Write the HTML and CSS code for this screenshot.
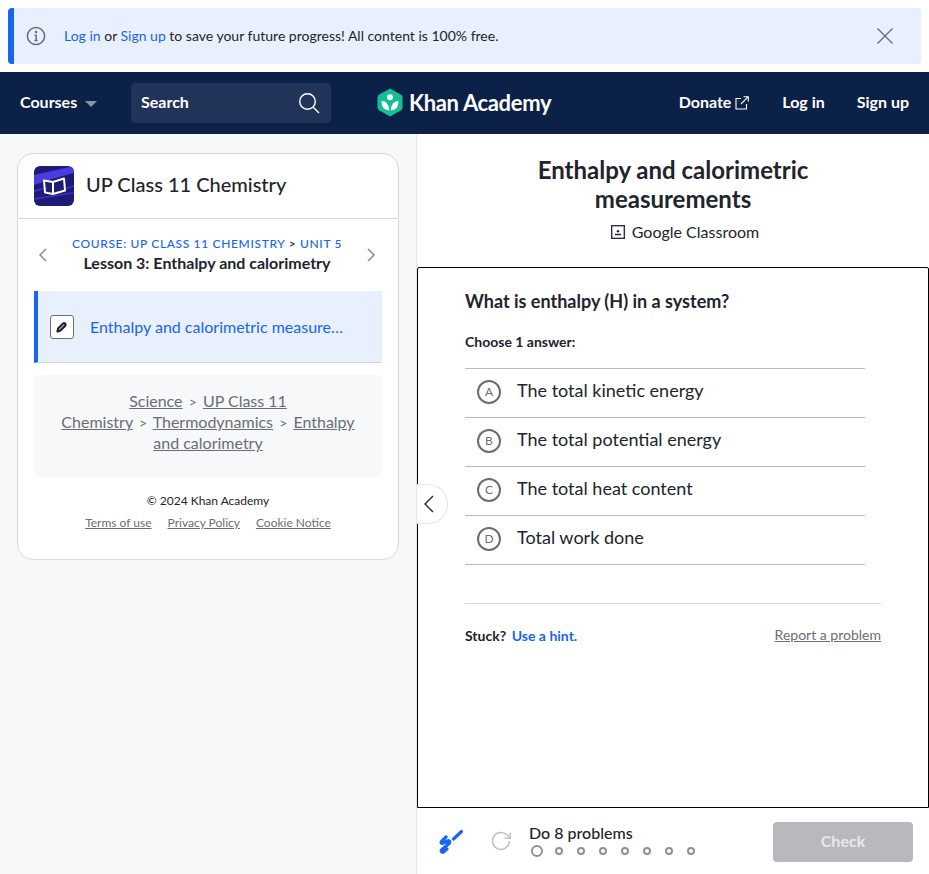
FILE: index.html
```html
<!DOCTYPE html>
<html lang="en">
<head>
    <meta charset="UTF-8">
    <meta name="viewport" content="width=device-width, initial-scale=1.0">
    <title>Enthalpy and calorimetric measurements</title>
    <link rel="stylesheet" href="styles.css">
</head>
<body>

    <div class="banner">
        <svg class="banner-info" width="20" height="20" viewBox="0 0 20 20" fill="none" stroke="#6b6d74" stroke-width="1.5">
            <circle cx="10" cy="10" r="8.6"/>
            <path d="M8.6 9.2h1.6v5M8.4 14.4h3.4"/>
            <circle cx="10" cy="6" r=".6"/>
        </svg>
        <p class="banner-text"><a href="#">Log in</a> or <a href="#">Sign up</a> to save your future progress! All content is 100% free.</p>
        <svg class="banner-close" width="16" height="16" viewBox="0 0 16 16" stroke="#6b6d74" stroke-width="1.4">
            <path d="M.5.5l15 15M15.500.5l-15 15"/>
        </svg>
    </div>

    <header class="topbar">
        <div class="topbar-left">
            <a class="nav-link courses" href="#">Courses <span class="caret"></span></a>
            <div class="search">
                <span class="search-label">Search</span>
                <svg width="22" height="22" viewBox="0 0 22 22" fill="none" stroke="#fff" stroke-width="1.4">
                    <circle cx="9.500" cy="9.500" r="7.800"/>
                    <path d="M15 15l6 6"/>
                </svg>
            </div>
        </div>
        <a class="logo" href="#">
            <svg width="26" height="29" viewBox="0 0 26 29">
                <path d="M13 .5l11 6.300q1.500.9 1.500 2.600v10.200q0 1.700-1.500 2.600l-11 6.300-11-6.300Q.5 21.300.5 19.600V9.400q0-1.700 1.500-2.600z" fill="#14bf96"/>
                <circle cx="13" cy="9.200" r="3" fill="#fff"/>
                <path d="M4.500 13q7.200 0 7.800 9.500-7.800-.2-7.800-9.500zM21.500 13q-7.200 0-7.800 9.500 7.800-.2 7.800-9.500z" fill="#fff"/>
            </svg>
            <span class="logo-text">Khan Academy</span>
        </a>
        <nav class="topbar-right">
            <a class="nav-link donate" href="#">Donate
                <svg class="ext-icon" width="14" height="14" viewBox="0 0 14 14" fill="none" stroke="#fff" stroke-width="1.100">
                    <path d="M6 2.500H1v10.500h10.500V8M8.500.7h4.800v4.800M13.300.7L6 8"/>
                </svg>
            </a>
            <a class="nav-link" href="#">Log in</a>
            <a class="nav-link" href="#">Sign up</a>
        </nav>
    </header>

    <main class="layout">
        <aside class="sidebar">
            <div class="course-card">
                <div class="course-head">
                    <div class="course-icon">
                        <svg width="40" height="40" viewBox="0 0 40 40">
                            <rect width="40" height="40" fill="#1d1a78"/>
                            <path d="M0 9L40 0v7L18 13 0 19z" fill="#4a3ce0"/>
                            <path d="M0 24l14-3v1.500L0 26zM30 22l10-3v2l-10 3zM0 32l40-6v1.500L0 34z" fill="#3a30b8"/>
                            <path d="M10 14.500l9 1.500V28l-8-1.500zM19 16l11-3.500 1 12L19 28z" fill="none" stroke="#fff" stroke-width="2" stroke-linejoin="round"/>
                        </svg>
                    </div>
                    <h2>UP Class 11 Chemistry</h2>
                </div>
                <div class="lesson-nav">
                    <svg width="10" height="14" viewBox="0 0 10 14" fill="none" stroke="#8a8b91" stroke-width="1.500"><path d="M8 1L2 7l6 6"/></svg>
                    <div class="lesson-titles">
                        <div class="crumb"><a href="#">COURSE: UP CLASS 11 CHEMISTRY</a> <span>&gt;</span> <a href="#">UNIT 5</a></div>
                        <div class="lesson-name">Lesson 3: Enthalpy and calorimetry</div>
                    </div>
                    <svg width="10" height="14" viewBox="0 0 10 14" fill="none" stroke="#8a8b91" stroke-width="1.500"><path d="M2 1l6 6-6 6"/></svg>
                </div>
                <a class="lesson-item" href="#">
                    <span class="pencil-box">
                        <svg width="14" height="14" viewBox="0 0 14 14" fill="none" stroke="#21242c" stroke-width="2.200">
                            <path d="M2.500 11.500l.6-3 5-5q1-.8 2 .1t.1 2l-5 5z" stroke-linejoin="round"/>
                        </svg>
                    </span>
                    <span class="lesson-item-text">Enthalpy and calorimetric measure…</span>
                </a>
                <div class="breadcrumb-box">
                    <a href="#">Science</a> <span class="sep">&gt;</span> <a href="#">UP Class 11<br>Chemistry</a> <span class="sep">&gt;</span> <a href="#">Thermodynamics</a> <span class="sep">&gt;</span> <a href="#">Enthalpy<br>and calorimetry</a>
                </div>
                <div class="copyright">© 2024 Khan Academy</div>
                <div class="legal">
                    <a href="#">Terms of use</a>
                    <a href="#">Privacy Policy</a>
                    <a href="#">Cookie Notice</a>
                </div>
            </div>
        </aside>

        <section class="content">
            <div class="content-head">
                <h1>Enthalpy and calorimetric<br>measurements</h1>
                <div class="classroom">
                    <svg width="14" height="14" viewBox="0 0 14 14" fill="none" stroke="#21242c" stroke-width="1.300">
                        <rect x=".7" y=".7" width="12.600" height="12.600"/>
                        <path d="M4 9.500h6" stroke-width="1.500"/>
                        <circle cx="7" cy="6.300" r="1.200" fill="#21242c" stroke="none"/>
                    </svg>
                    <span>Google Classroom</span>
                </div>
            </div>

            <div class="exercise">
                <div class="question">
                    <h3>What is enthalpy (H) in a system?</h3>
                    <div class="choose">Choose 1 answer:</div>
                    <ul class="choices">
                        <li><span class="letter">A</span>The total kinetic energy</li>
                        <li><span class="letter">B</span>The total potential energy</li>
                        <li><span class="letter">C</span>The total heat content</li>
                        <li><span class="letter">D</span>Total work done</li>
                    </ul>
                </div>
                <div class="stuck">
                    <div><b>Stuck?</b> <a class="hint" href="#">Use a hint.</a></div>
                    <a class="report" href="#">Report a problem</a>
                </div>
            </div>

            <div class="bottom-bar">
                <svg class="scratch" width="26" height="26" viewBox="0 0 26 26" fill="none" stroke="#1865f2" stroke-width="3.200" stroke-linecap="round" stroke-linejoin="round">
                    <path d="M8 9L3.500 13.500c-1 1.500.5 2.500 2 1.500L9.500 13c2-1 3 1 1.500 2.500L3.500 22c-1 1.500 1 3 2.500 1.500L9 21"/>
                    <path d="M15.500 11l8-7.500" stroke-width="3.200"/>
                </svg>
                <svg class="redo" width="20" height="20" viewBox="0 0 20 20" fill="none" stroke="#bfc0c3" stroke-width="1.500">
                    <path d="M18.500 10a8.500 8.500 0 1 1-2.600-6.200L19 7"/>
                    <path d="M19.300 1.500V7.300H13.500"/>
                </svg>
                <div class="progress">
                    <div class="progress-title">Do 8 problems</div>
                    <div class="dots">
                        <span class="dot current"></span>
                        <span class="dot"></span>
                        <span class="dot"></span>
                        <span class="dot"></span>
                        <span class="dot"></span>
                        <span class="dot"></span>
                        <span class="dot"></span>
                        <span class="dot"></span>
                    </div>
                </div>
                <button class="check">Check</button>
            </div>

            <button class="collapse">
                <svg width="11" height="18" viewBox="0 0 11 18" fill="none" stroke="#21242c" stroke-width="1.400"><path d="M10 1L2 9l8 8"/></svg>
            </button>
        </section>
    </main>

</body>
</html>
```

FILE: styles.css
```css
* {
    box-sizing: border-box;
}
html, body {
    height: 874px;
    margin: 0;
    overflow: hidden;
}
body {
    font-family: Lato, "Noto Sans", sans-serif;
    color: #21242c;
    background: #fff;
    display: flex;
    flex-direction: column;
}
a {
    text-decoration: none;
    color: inherit;
}

/* top banner */
.banner {
    height: 56px;
    margin: 8px 8px 8px 8px;
    flex: none;
    background: #e9f0fd;
    border-left: 6px solid #1865f2;
    border-radius: 4px;
    display: flex;
    align-items: center;
    padding: 0 28px 0 12px;
}
.banner-info {
    flex: none;
}
.banner-text {
    margin: 0 0 2px 18px;
    font-size: 14px;
    flex: 1;
}
.banner-text a {
    color: #1865f2;
}

/* nav */
.topbar {
    height: 62px;
    flex: none;
    background: #0c2148;
    color: #fff;
    display: flex;
    align-items: center;
    justify-content: space-between;
    padding: 0 20px;
    position: relative;
}
.topbar-left {
    display: flex;
    align-items: center;
}
.nav-link {
    font-size: 16px;
    font-weight: 700;
    color: #fff;
}
.courses {
    display: flex;
    align-items: center;
    gap: 8px;
    width: 111px;
    padding-bottom: 4px;
}
.caret {
    width: 0;
    height: 0;
    border-left: 6px solid transparent;
    border-right: 6px solid transparent;
    border-top: 6px solid #8a94a8;
    margin-top: 5px;
}
.search {
    width: 200px;
    height: 40px;
    background: #213358;
    border-radius: 4px;
    display: flex;
    align-items: center;
    justify-content: space-between;
    padding: 0 11px 0 10px;
    font-size: 16px;
    font-weight: 700;
}
.search-label {
    padding-bottom: 4px;
}
.logo {
    display: flex;
    align-items: center;
    gap: 6px;
    color: #fff;
    position: absolute;
    left: 377px;
    top: 16px;
}
.logo-text {
    font-size: 22px;
    font-weight: 700;
    letter-spacing: -.35px;
}
.topbar-right {
    display: flex;
    align-items: center;
    gap: 32px;
    padding-bottom: 4px;
}
.donate {
    margin-right: 1px;
}
.ext-icon {
    vertical-align: -2px;
}

.layout {
    flex: 1;
    display: flex;
    min-height: 0;
}

/* sidebar */
.sidebar {
    width: 417px;
    flex: none;
    background: #f7f8fa;
    padding: 19px 17px 0 17px;
    border-right: 1px solid #e4e5e7;
}
.course-card {
    background: #fff;
    border: 1px solid #d8d9db;
    border-radius: 16px;
    height: 407px;
    padding: 0 16px;
}
.course-head {
    height: 65px;
    margin: 0 -16px;
    padding: 0 16px;
    border-bottom: 1px solid #d8d9db;
    display: flex;
    align-items: center;
    gap: 12px;
}
.course-icon {
    width: 40px;
    height: 40px;
    border-radius: 6px;
    overflow: hidden;
}
.course-icon svg {
    display: block;
}
.course-head h2 {
    margin: 0 0 4px 0;
    font-size: 20px;
    font-weight: 500;
}
.lesson-nav {
    height: 72px;
    display: flex;
    align-items: center;
    justify-content: space-between;
    padding: 0 6px 0 4px;
}
.lesson-titles {
    text-align: center;
}
.crumb {
    font-size: 12px;
    letter-spacing: .65px;
    font-weight: 500;
    color: #1865f2;
    line-height: 16px;
}
.crumb span {
    color: #21242c;
}
.lesson-name {
    font-size: 16px;
    font-weight: 700;
    line-height: 22px;
}
.lesson-item {
    height: 72px;
    background: #e9f0fd;
    border-left: 4px solid #1865f2;
    border-bottom: 1px solid #d8d9db;
    display: flex;
    align-items: center;
    padding-left: 12px;
    gap: 16px;
    color: #1865f2;
    font-size: 16px;
}
.pencil-box {
    width: 24px;
    height: 24px;
    border: 1px solid #6b6d74;
    border-radius: 3px;
    background: #fff;
    display: flex;
    align-items: center;
    justify-content: center;
}
.breadcrumb-box {
    margin-top: 12px;
    height: 102px;
    background: #f7f8fa;
    border-radius: 4px;
    padding: 15px 10px;
    text-align: center;
    font-size: 16px;
    line-height: 21px;
    color: #6b6d74;
}
.breadcrumb-box a {
    text-decoration: underline;
}
.breadcrumb-box .sep {
    margin: 0 2px;
    font-size: 14px;
    line-height: 1;
}
.copyright {
    text-align: center;
    font-size: 12px;
    margin-top: 16px;
    line-height: 16px;
}
.legal {
    display: flex;
    justify-content: center;
    gap: 16px;
    font-size: 12px;
    line-height: 16px;
    margin-top: 6px;
    color: #6b6d74;
}
.legal a {
    text-decoration: underline;
}

/* right side */
.content {
    flex: 1;
    display: flex;
    flex-direction: column;
    position: relative;
    min-width: 0;
}
.content-head {
    height: 133px;
    flex: none;
    text-align: center;
    padding-top: 21px;
}
.content-head h1 {
    margin: 0;
    font-size: 24px;
    font-weight: 700;
    line-height: 29px;
}
.classroom {
    display: flex;
    justify-content: center;
    align-items: center;
    gap: 7px;
    margin: 9px 0 0 24px;
    font-size: 16px;
}
.exercise {
    flex: 1;
    border: 1px solid #000;
    border-radius: 2px 2px 0 0;
    padding: 0 47px 0 47px;
    display: flex;
    flex-direction: column;
}
.question h3 {
    margin: 21px 0 0 0;
    font-size: 18px;
    font-weight: 700;
    line-height: 24px;
}
.choose {
    margin-top: 20px;
    font-size: 14px;
    font-weight: 700;
    line-height: 18px;
}
.choices {
    list-style: none;
    margin: 17px 16px 0 0;
    padding: 0;
    border-top: 1px solid #b9babd;
}
.choices li {
    height: 49px;
    border-bottom: 1px solid #b9babd;
    display: flex;
    align-items: center;
    padding-left: 12px;
    gap: 16px;
    font-size: 18px;
    padding-bottom: 6px;
}
.letter {
    width: 24px;
    height: 24px;
    border: 2px solid #6b6d74;
    border-radius: 50%;
    font-size: 12px;
    color: #6b6d74;
    display: flex;
    align-items: center;
    justify-content: center;
    margin-top: 3px;
}
.stuck {
    margin-top: 38px;
    border-top: 1px solid #d8d9db;
    padding-top: 23px;
    display: flex;
    justify-content: space-between;
    font-size: 14px;
    line-height: 18px;
}
.hint {
    color: #1865f2;
    font-weight: 700;
    margin-left: 2px;
}
.report {
    color: #6b6d74;
    text-decoration: underline;
    margin-top: -1px;
}
.bottom-bar {
    height: 66px;
    flex: none;
    display: flex;
    align-items: center;
    padding: 0 16px 0 21px;
}
.scratch {
    flex: none;
}
.redo {
    flex: none;
    margin-left: 27px;
}
.progress {
    margin-left: 18px;
    flex: 1;
    margin-top: -2px;
}
.progress-title {
    font-size: 16px;
    font-weight: 500;
    line-height: 20px;
}
.dots {
    display: flex;
    align-items: center;
    gap: 14px;
    margin: 2px 0 0 2px;
}
.dot {
    width: 8px;
    height: 8px;
    border: 2px solid #8f9094;
    border-radius: 50%;
}
.dot.current {
    width: 12px;
    height: 12px;
    margin-right: -2px;
}
.check {
    width: 140px;
    height: 40px;
    margin-top: 2px;
    padding: 0 0 4px 0;
    background: #b8b9bc;
    color: #e9e9ea;
    border: none;
    border-radius: 4px;
    font-family: inherit;
    font-size: 16px;
    font-weight: 700;
}
.collapse {
    position: absolute;
    left: 0;
    top: 350px;
    width: 31px;
    height: 40px;
    padding: 0 0 0 6px;
    background: #fff;
    border: 1px solid #e4e5e7;
    border-left: none;
    border-radius: 0 20px 20px 0;
    display: flex;
    align-items: center;
}
```
